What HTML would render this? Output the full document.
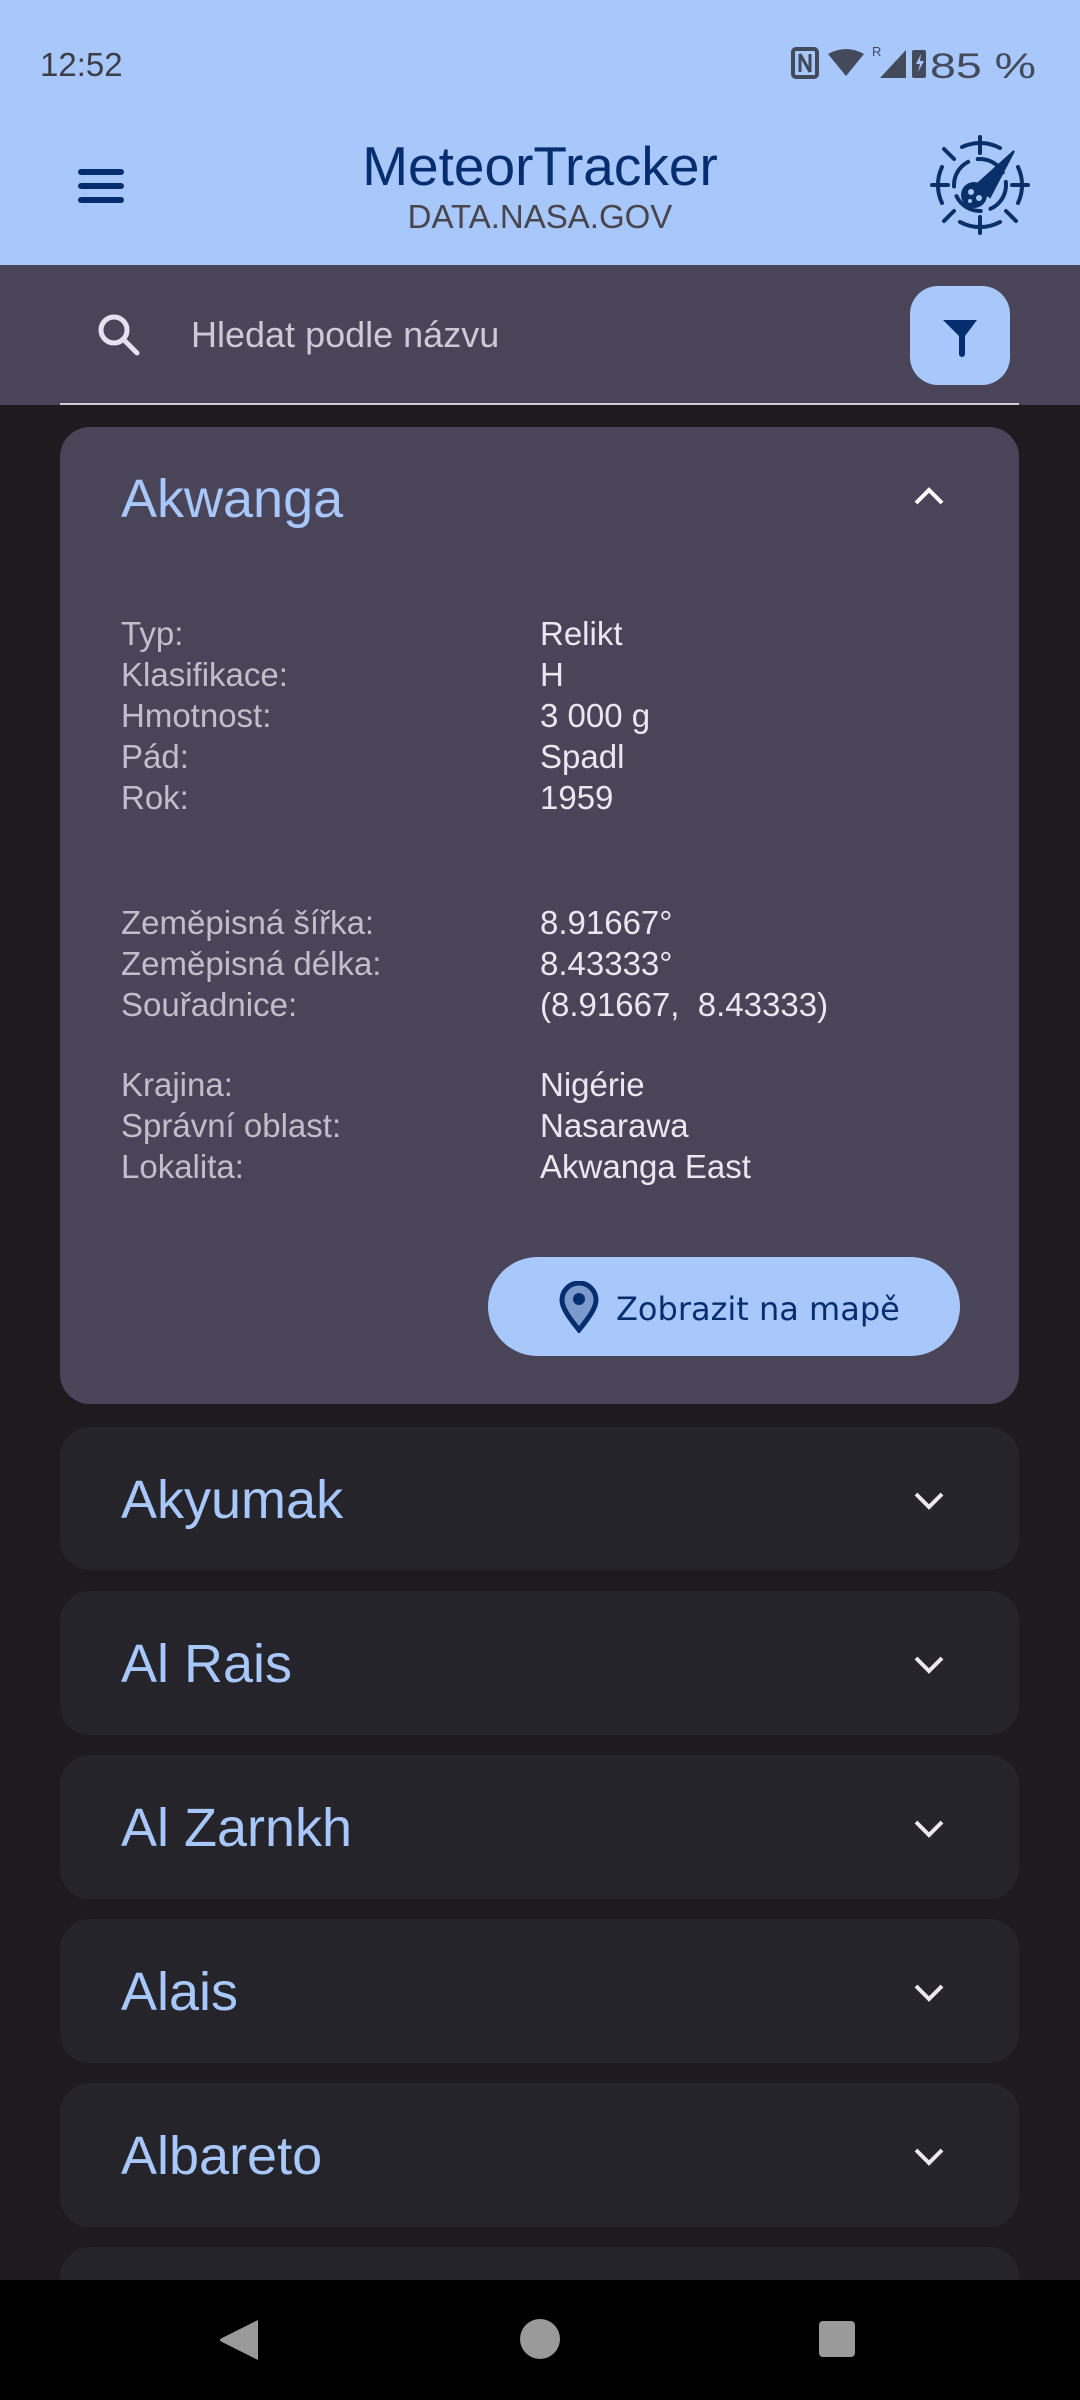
<!DOCTYPE html>
<html><head><meta charset="utf-8"><style>
*{margin:0;padding:0;box-sizing:border-box}
body{width:1080px;height:2400px;background:#1d1b20;font-family:"Liberation Sans",sans-serif;position:relative;overflow:hidden}
.a{position:absolute}
.hdr{left:0;top:0;width:1080px;height:265px;background:#a8c7fa}
.sb{left:0;top:265px;width:1080px;height:140px;background:#4a4458}
.card{left:60px;width:959px;border-radius:30px;background:#25242a}
.ttl{font-size:54px;color:#a8c7fa;left:121px}
.lbl{left:121px;font-size:33px;color:#c3bdcb;line-height:41px}
.val{left:540px;font-size:33px;color:#ece6f0;line-height:41px}
</style></head><body>
<div class="a hdr"></div>
<div class="a" style="left:40px;top:46px;font-size:33px;color:#3c3f4a">12:52</div>
<svg class="a" style="left:790px;top:44px" width="260" height="40" viewBox="0 0 260 40">
<rect x="3" y="5" width="24" height="28" rx="3" fill="none" stroke="#434a5c" stroke-width="4"/><path d="M10 10v18M20 10v18M10 10l10 18" stroke="#434a5c" stroke-width="3" fill="none"/>
<path d="M38 10 Q56 0 74 10 L56 32Z" fill="#434a5c"/>
<text x="82" y="12" font-size="13" fill="#434a5c" font-family="Liberation Sans">R</text>
<path d="M90 34 L116 6 L116 34Z" fill="#434a5c"/>
<rect x="122" y="6" width="14" height="28" rx="2" fill="#434a5c"/><path d="M131 10l-5 10h4l-2 8 6-11h-4z" fill="#a8c7fa"/>
<text x="140" y="34" font-size="35" fill="#434a5c" font-family="Liberation Sans" textLength="106" lengthAdjust="spacingAndGlyphs">85 %</text>
</svg>
<svg class="a" style="left:78px;top:168px" width="46" height="36"><rect x="0" y="1" width="46" height="6" rx="3" fill="#062e6f"/><rect x="0" y="15" width="46" height="6" rx="3" fill="#062e6f"/><rect x="0" y="29" width="46" height="6" rx="3" fill="#062e6f"/></svg>
<div class="a" style="left:0;width:1080px;top:134px;text-align:center;font-size:55px;color:#062e6f">MeteorTracker</div>
<div class="a" style="left:0;width:1080px;top:198px;text-align:center;font-size:33px;color:#49454f">DATA.NASA.GOV</div>
<svg class="a" style="left:930px;top:135px" width="100" height="100" viewBox="-50 -50 100 100" fill="none" stroke="#0a3069" stroke-width="4" stroke-linecap="round">
<path d="M-18 -38 A42 42 0 0 1 20 -37"/><path d="M38 -18 A42 42 0 0 1 38 18"/><path d="M20 37 A42 42 0 0 1 -20 37"/><path d="M-38 18 A42 42 0 0 1 -38 -18"/>
<circle r="26" stroke-dasharray="30 10"/>
<path d="M0 -48v16M0 32v16M-48 0h16M32 0h16M-36 -36l10 10M26 26l10 10M-26 26l-10 10"/>
<path d="M-6 2 L34 -34 L10 12Z" fill="#0a3069" stroke-width="2"/>
<circle cx="-6" cy="10" r="13" fill="#0a3069" stroke="none"/>
<circle cx="-9" cy="7" r="3" fill="#a8c7fa" stroke="none"/><circle cx="-1" cy="13" r="3" fill="#a8c7fa" stroke="none"/><circle cx="-10" cy="16" r="2" fill="#a8c7fa" stroke="none"/>
</svg>
<div class="a sb"></div>
<svg class="a" style="left:96px;top:312px" width="46" height="46" viewBox="0 0 46 46" fill="none" stroke="#e6e0f0" stroke-width="5"><circle cx="18" cy="18" r="13"/><path d="M27 27l14 14" stroke-linecap="round"/></svg>
<div class="a" style="left:191px;top:314px;font-size:36px;color:#cfc8d6">Hledat podle názvu</div>
<div class="a" style="left:910px;top:286px;width:100px;height:99px;border-radius:28px;background:#a8c7fa"></div>
<svg class="a" style="left:940px;top:318px" width="40" height="40" viewBox="0 0 40 40"><path d="M3 2h34l-12 16v18a3 3 0 0 1-6 0V18Z" fill="#062e6f"/></svg>
<div class="a" style="left:60px;top:403px;width:959px;height:2px;background:#d0ccd6"></div>

<div class="a card" style="top:427px;height:977px;background:#4a4458"></div>
<div class="a ttl" style="top:468px">Akwanga</div>
<svg class="a" style="left:913px;top:485px" width="32" height="22"><path d="M3 18L16 5L29 18" stroke="#fff" stroke-width="4" fill="none"/></svg>
<div class="a lbl" style="top:613px">Typ:<br>Klasifikace:<br>Hmotnost:<br>Pád:<br>Rok:</div>
<div class="a val" style="top:613px">Relikt<br>H<br>3 000 g<br>Spadl<br>1959</div>
<div class="a lbl" style="top:902px">Zeměpisná šířka:<br>Zeměpisná délka:<br>Souřadnice:</div>
<div class="a val" style="top:902px">8.91667°<br>8.43333°<br>(8.91667,&nbsp; 8.43333)</div>
<div class="a lbl" style="top:1064px">Krajina:<br>Správní oblast:<br>Lokalita:</div>
<div class="a val" style="top:1064px">Nigérie<br>Nasarawa<br>Akwanga East</div>
<div class="a" style="left:488px;top:1257px;width:472px;height:99px;border-radius:50px;background:#a8c7fa"></div>
<svg class="a" style="left:559px;top:1281px" width="40" height="52" viewBox="0 0 40 52"><path d="M20 49C8 34 3 26 3 19A17 17 0 0 1 37 19C37 26 32 34 20 49Z" fill="#7c9acc" stroke="#062e6f" stroke-width="5"/><circle cx="20" cy="18" r="6" fill="#062e6f"/></svg>
<div class="a" style="left:616px;top:1290px;font-size:32px;color:#062e6f;font-family:'DejaVu Sans',sans-serif">Zobrazit na mapě</div>

<div class="a card" style="top:1427px;height:143px"></div>
<div class="a ttl" style="top:1469px">Akyumak</div>
<div class="a card" style="top:1591px;height:144px"></div>
<div class="a ttl" style="top:1633px">Al Rais</div>
<div class="a card" style="top:1755px;height:144px"></div>
<div class="a ttl" style="top:1797px">Al Zarnkh</div>
<div class="a card" style="top:1919px;height:144px"></div>
<div class="a ttl" style="top:1961px">Alais</div>
<div class="a card" style="top:2083px;height:144px"></div>
<div class="a ttl" style="top:2125px">Albareto</div>
<div class="a card" style="top:2247px;height:144px"></div>
<svg class="a" style="left:913px;top:1490px" width="32" height="760">
<g stroke="#ece6f0" stroke-width="4" fill="none">
<path d="M3 4L16 17L29 4"/><path d="M3 168L16 181L29 168"/><path d="M3 332L16 345L29 332"/><path d="M3 496L16 509L29 496"/><path d="M3 660L16 673L29 660"/></g></svg>

<div class="a" style="left:0;top:2280px;width:1080px;height:120px;background:#000"></div>
<svg class="a" style="left:0;top:2280px" width="1080" height="120">
<path d="M258 40 L258 80 L222 62 Q218 60 222 58Z" fill="#9a9a9a"/>
<circle cx="540" cy="59" r="20" fill="#9a9a9a"/>
<rect x="819" y="41" width="36" height="36" rx="4" fill="#9a9a9a"/>
</svg>
</body></html>
